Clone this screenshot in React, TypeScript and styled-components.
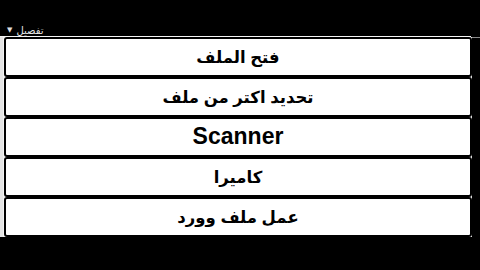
import React from 'react';
import styled, { createGlobalStyle } from 'styled-components';

const GlobalStyle = createGlobalStyle`
  html, body {
    margin: 0;
    padding: 0;
    background: #000;
  }
  body {
    width: 480px;
    height: 270px;
    overflow: hidden;
    font-family: "Liberation Sans", "DejaVu Sans", sans-serif;
  }
`;

const items = [
  { label: 'فتح الملف', latin: false },
  { label: 'تحديد اكتر من ملف', latin: false },
  { label: 'Scanner', latin: true },
  { label: 'كاميرا', latin: false },
  { label: 'عمل ملف وورد', latin: false },
];

export default function App() {
  return (
    <Screen>
      <GlobalStyle />
      <TopBar>
        <DetailsLabel>
          <Caret>▼</Caret>
          <span dir="rtl">تفصيل</span>
        </DetailsLabel>
      </TopBar>
      <Panel>
        <ButtonList>
          {items.map((item) => (
            <MenuButton key={item.label} $latin={item.latin}>
              <span dir={item.latin ? 'ltr' : 'rtl'}>{item.label}</span>
            </MenuButton>
          ))}
        </ButtonList>
        <RightGutter />
      </Panel>
    </Screen>
  );
}

const Screen = styled.div`
  width: 480px;
  height: 270px;
  background: #000;
  display: flex;
  flex-direction: column;
`;

const TopBar = styled.div`
  height: 37px;
  display: flex;
  align-items: flex-end;
  padding-left: 7px;
  border-bottom: 1px solid #f4f4f4;
  box-sizing: border-box;
  margin-right: 9px;
`;

const DetailsLabel = styled.div`
  display: flex;
  align-items: center;
  gap: 4px;
  color: #e6e6e6;
  font-family: "DejaVu Sans", "Liberation Sans", sans-serif;
  font-size: 10px;
  line-height: 11px;
`;

const Caret = styled.span`
  font-size: 7px;
  color: #ddd;
`;

const Panel = styled.div`
  display: flex;
  height: 200px;
`;

const ButtonList = styled.div`
  flex: 1;
  display: flex;
  flex-direction: column;
  background: #f2f2f2;
  border-left: 3px solid #e4e4e4;
  padding-left: 1px;
`;

const RightGutter = styled.div`
  width: 8px;
  background: #000;
  border-top: 1px solid #8a8a8a;
`;

const MenuButton = styled.div<{ $latin: boolean }>`
  height: 40px;
  box-sizing: border-box;
  background: #fff;
  border: 2px solid #000;
  border-radius: 3px;
  display: flex;
  align-items: center;
  justify-content: center;
  color: #000;
  font-weight: bold;
  font-size: ${(p) => (p.$latin ? '23px' : '16.5px')};
  padding-bottom: ${(p) => (p.$latin ? '1px' : '0')};
`;
